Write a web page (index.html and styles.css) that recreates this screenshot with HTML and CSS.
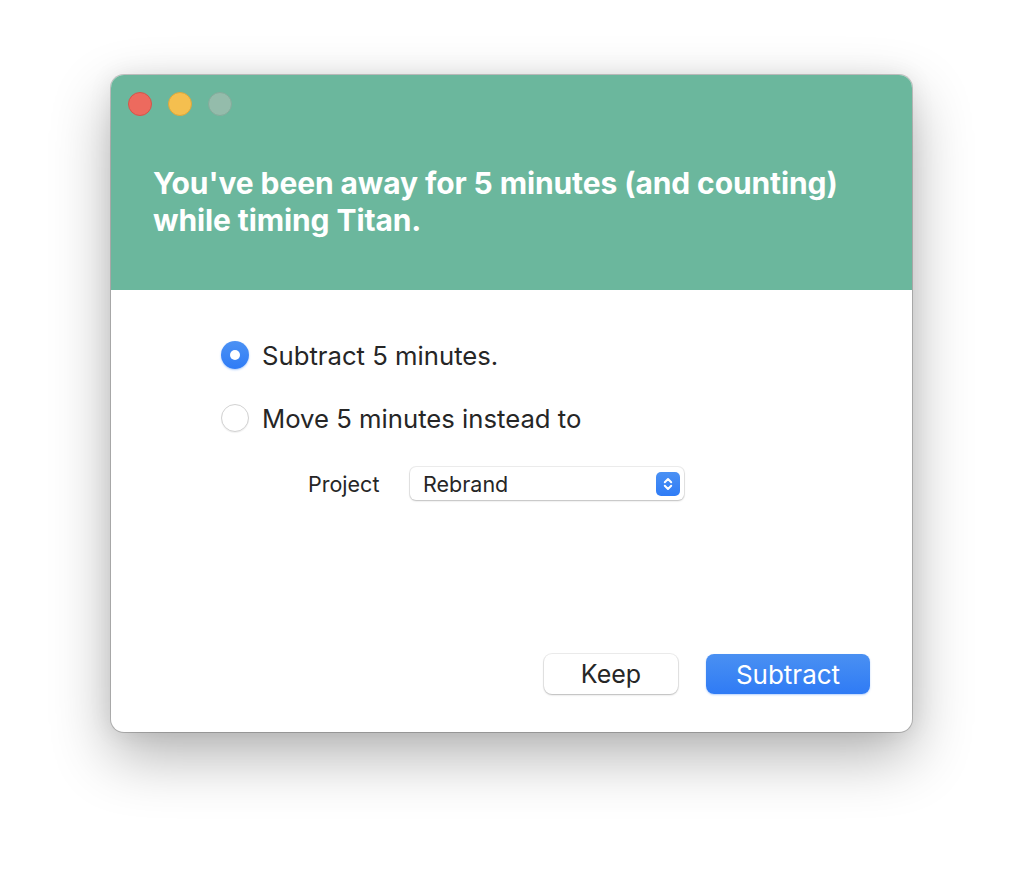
FILE: index.html
```html
<!DOCTYPE html>
<html>
<head>
<meta charset="utf-8">
<link rel="stylesheet" href="styles.css">
</head>
<body>
<div class="window">
  <div class="header">
    <div class="lights">
      <span class="light red"></span>
      <span class="light yellow"></span>
      <span class="light grey"></span>
    </div>
    <h1 class="title">You've been away for 5 minutes (and counting)<br>while timing Titan.</h1>
  </div>
  <div class="content">
    <div class="options">
      <label class="option">
        <span class="radio checked"></span>
        <span class="option-text">Subtract 5 minutes.</span>
      </label>
      <label class="option">
        <span class="radio"></span>
        <span class="option-text">Move 5 minutes instead to</span>
      </label>
      <div class="project-row">
        <span class="project-label">Project</span>
        <div class="select">
          <span class="select-text">Rebrand</span>
          <span class="stepper">
            <svg width="12" height="16" viewBox="0 0 12 16"><path d="M2.8 6.2 L6 3 L9.2 6.2 M2.8 9.8 L6 13 L9.2 9.8" fill="none" stroke="#fff" stroke-width="2" stroke-linecap="round" stroke-linejoin="round"/></svg>
          </span>
        </div>
      </div>
    </div>
    <div class="footer">
      <button class="btn btn-keep">Keep</button>
      <button class="btn btn-primary">Subtract</button>
    </div>
  </div>
</div>
</body>
</html>
```
FILE: styles.css
```css
html, body {
  margin: 0;
  padding: 0;
  background: #ffffff;
}
body {
  font-family: Inter, "Liberation Sans", sans-serif;
  color: #262626;
  padding: 75px 0 0 111px;
  min-height: 880px;
  box-sizing: border-box;
}
.window {
  width: 801px;
  height: 657px;
  border-radius: 13px;
  overflow: hidden;
  background: #ffffff;
  display: flex;
  flex-direction: column;
  box-shadow: 0 0 0 1px rgba(0,0,0,0.2), 0 24px 60px rgba(0,0,0,0.3), 0 0 24px rgba(0,0,0,0.08);
}
.header {
  background: #6bb79d;
  height: 215px;
  box-sizing: border-box;
  padding: 17px 0 0 17px;
}
.lights {
  display: flex;
  gap: 16px;
  height: 24px;
}
.light {
  width: 24px;
  height: 24px;
  border-radius: 50%;
  box-sizing: border-box;
}
.red { background: #ed6a5e; border: 1px solid #d4554a; }
.yellow { background: #f5bf4f; border: 1px solid #dea73a; }
.grey { background: #94bcab; border: 1px solid #84ab9b; }
.title {
  margin: 49px 0 0 25px;
  color: #ffffff;
  font-size: 30px;
  font-weight: 700;
  line-height: 37px;
  letter-spacing: -0.1px;
  white-space: nowrap;
}
.content {
  flex: 1;
  display: flex;
  flex-direction: column;
  padding: 51px 42px 38px 110px;
}
.options {
  display: flex;
  flex-direction: column;
}
.option {
  display: flex;
  align-items: center;
  gap: 13px;
  height: 28px;
  margin-bottom: 35px;
}
.radio {
  width: 28px;
  height: 28px;
  border-radius: 50%;
  box-sizing: border-box;
  background: #ffffff;
  border: 1px solid #d2d2d2;
  box-shadow: 0 1px 1px rgba(0,0,0,0.06);
  position: relative;
  flex: none;
}
.radio.checked {
  background: linear-gradient(#4b91f4, #2f7cf6);
  border: none;
  box-shadow: 0 1px 2px rgba(47,124,246,0.4);
}
.radio.checked::after {
  content: "";
  position: absolute;
  left: 9px;
  top: 9px;
  width: 10px;
  height: 10px;
  border-radius: 50%;
  background: #ffffff;
}
.option-text {
  font-size: 25.7px;
  color: #262626;
}
.project-row {
  display: flex;
  align-items: center;
  margin-top: 0;
  padding-left: 87px;
}
.project-label {
  font-size: 21.5px;
  width: 102px;
}
.select {
  width: 274px;
  height: 33px;
  box-sizing: border-box;
  border-radius: 6px;
  background: #ffffff;
  box-shadow: 0 0 0 1px rgba(0,0,0,0.07), 0 1px 2px rgba(0,0,0,0.2);
  display: flex;
  align-items: center;
  justify-content: space-between;
  padding: 0 4px 0 13px;
}
.select-text {
  font-size: 21.5px;
}
.stepper {
  width: 24px;
  height: 24px;
  border-radius: 5px;
  background: linear-gradient(#4b91f4, #2f7cf6);
  display: flex;
  align-items: center;
  justify-content: center;
}
.footer {
  margin-top: auto;
  display: flex;
  justify-content: flex-end;
  gap: 28px;
}
.btn {
  height: 40px;
  border-radius: 8px;
  font-family: Inter, "Liberation Sans", sans-serif;
  border: none;
  padding: 0;
}
.btn-keep {
  width: 134px;
  font-size: 25px;
  background: #ffffff;
  color: #262626;
  box-shadow: 0 0 0 1px rgba(0,0,0,0.07), 0 1px 2px rgba(0,0,0,0.22);
}
.btn-primary {
  width: 164px;
  font-size: 26px;
  color: #ffffff;
  background: linear-gradient(#4a90f2, #2f7bf5);
  box-shadow: 0 1px 2px rgba(47,124,246,0.35);
}
```
